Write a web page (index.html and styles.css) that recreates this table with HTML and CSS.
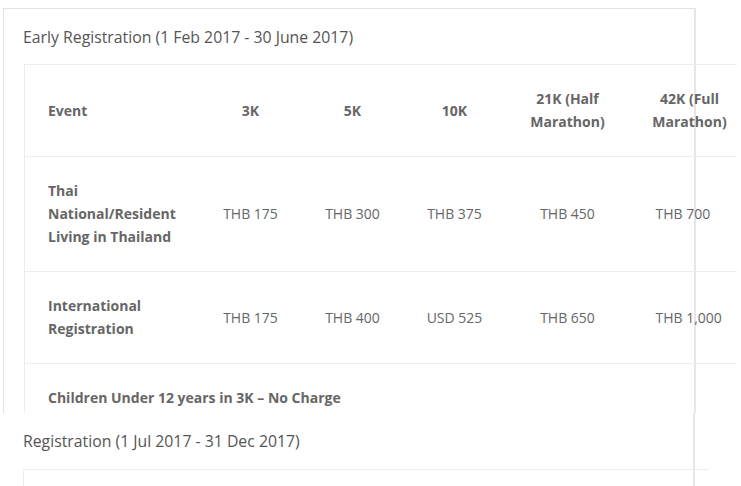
FILE: index.html
```html
<!DOCTYPE html>
<html lang="en">
<head>
<meta charset="utf-8">
<title>Registration Fees</title>
<link rel="stylesheet" href="styles.css">
</head>
<body>
<div class="shot shot-a">
  <section class="panel">
    <h3 class="panel-title">Early Registration (1 Feb 2017 - 30 June 2017)</h3>
    <table class="fees">
      <colgroup>
        <col class="c-event"><col class="c-3k"><col class="c-5k"><col class="c-10k"><col class="c-21k"><col class="c-42k">
      </colgroup>
      <tr>
        <th class="lead">Event</th>
        <th>3K</th>
        <th>5K</th>
        <th>10K</th>
        <th>21K (Half<br>Marathon)</th>
        <th>42K (Full<br>Marathon)</th>
      </tr>
      <tr>
        <th class="lead">Thai<br>National/Resident<br>Living in Thailand</th>
        <td>THB 175</td>
        <td>THB 300</td>
        <td>THB 375</td>
        <td>THB 450</td>
        <td class="last">THB 700</td>
      </tr>
      <tr>
        <th class="lead">International<br>Registration</th>
        <td>THB 175</td>
        <td>THB 400</td>
        <td>USD 525</td>
        <td>THB 650</td>
        <td class="last">THB 1,000</td>
      </tr>
      <tr>
        <th class="lead" colspan="6">Children Under 12 years in 3K – No Charge</th>
      </tr>
    </table>
  </section>
</div>
<div class="shot shot-b">
  <section class="panel panel-b">
    <h3 class="panel-title">Registration (1 Jul 2017 - 31 Dec 2017)</h3>
    <table class="fees fees-b">
      <tr><td class="empty"></td></tr>
    </table>
  </section>
</div>
</body>
</html>
```

FILE: styles.css
```css
html, body {
  margin: 0;
  padding: 0;
  background: #fff;
}
body {
  font-family: "Open Sans", "Liberation Sans", sans-serif;
  color: #666;
  width: 741px;
  overflow: hidden;
}
.shot {
  overflow: hidden;
  box-sizing: border-box;
}
.shot-a {
  height: 413px;
  padding: 8px 0 0 3px;
}
.shot-b {
  height: 73px;
}
.panel {
  width: 693px;
  box-sizing: border-box;
  border-top: 1px solid #e1e1e1;
  border-left: 1px solid #e1e1e1;
  border-right: 2px solid #e6e6e6;
  padding: 17px 20px 0 19px;
  height: 600px;
}
.panel-b {
  margin-left: 3px;
  width: 692px;
  border-top: none;
  border-left: none;
  padding: 17px 20px 0 20px;
}
.panel-title {
  margin: 0 0 16px 0;
  font-size: 15.8px;
  font-weight: 400;
  line-height: 22px;
  color: #555;
}
.panel-b .panel-title {
  margin-bottom: 17px;
}
.fees {
  width: 712px;
  table-layout: fixed;
  border-collapse: collapse;
  border-top: 1px solid #ececec;
  border-left: 1px solid #ececec;
  margin-left: 1px;
}
.fees-b {
  width: 686px;
  margin-left: 0;
}
.fees tr {
  border-bottom: 1px solid #ececec;
}
.fees th, .fees td {
  padding: 22px 0 23px;
  font-size: 14px;
  line-height: 23px;
  color: #666;
  text-align: center;
  white-space: nowrap;
  vertical-align: middle;
}
.fees th {
  font-weight: 700;
}
.fees .lead {
  text-align: left;
  padding-left: 23px;
}
.fees .last {
  text-align: left;
  padding-left: 13px;
}
.fees .empty {
  height: 46px;
}
.c-event { width: 188px; }
.c-3k { width: 76px; }
.c-5k { width: 128px; }
.c-10k { width: 76px; }
.c-21k { width: 150px; }
.c-42k { width: 94px; }
```
